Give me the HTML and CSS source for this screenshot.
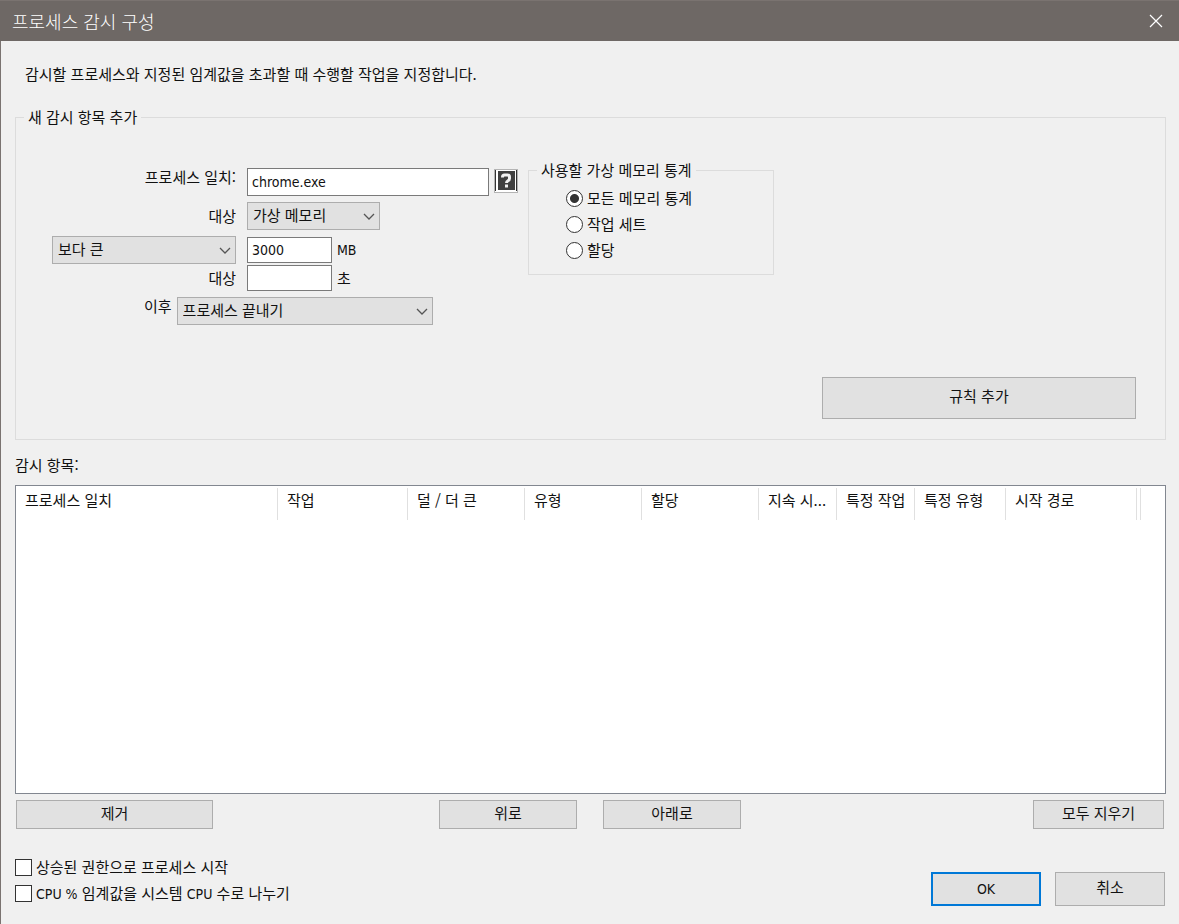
FILE: index.html
```html
<!DOCTYPE html>
<html lang="ko">
<head>
<meta charset="utf-8">
<title>프로세스 감시 구성</title>
<link rel="stylesheet" href="styles.css">
</head>
<body>
<header class="titlebar">
  <h1 class="title">프로세스 감시 구성</h1>
  <button class="close" type="button" aria-label="닫기">
    <svg width="14" height="14" viewBox="0 0 14 14" fill="none" stroke="#fff" stroke-width="1.2"><path d="M1 1l12 12M13 1L1 13"/></svg>
  </button>
</header>
<main class="dialog">
  <p class="intro">감시할 프로세스와 지정된 임계값을 초과할 때 수행할 작업을 지정합니다.</p>

  <fieldset class="group new-item">
    <legend>새 감시 항목 추가</legend>
    <div class="editor">
      <div class="form">
        <div class="row row-top">
          <label class="lead" for="match">프로세스 일치:</label>
          <input class="field field-wide" id="match" type="text" value="chrome.exe">
          <button class="help" type="button" aria-label="도움말">
            <svg width="24" height="24" viewBox="0 0 24 24"><path fill="#b4b4b4" d="M0 0h24v24H0z"/><path fill="#fff" d="M1 1h22v22H1z"/><path fill="#333" d="M1 1h1v21H1zM22 1h1v21h-1z"/><path fill="#404040" d="M4 2h17v19H4z"/><path fill="none" stroke="#f2f2f2" stroke-width="3" d="M8.500 8.500V8q0-2 2-2h3q2 0 2 2v1.500q0 1.500-1.500 2.200-1.500.8-1.500 2.300"/><path fill="#f2f2f2" d="M11 15.500h3v3h-3z"/></svg>
          </button>
        </div>
        <div class="row">
          <label class="lead" for="target">대상</label>
          <span class="combo combo-s">
            <select id="target"><option>가상 메모리</option></select>
            <svg class="chevron" viewBox="0 0 12 8"><path d="M1 1l5 5 5-5"/></svg>
          </span>
        </div>
        <div class="row">
          <span class="combo combo-m">
            <select aria-label="비교"><option>보다 큰</option></select>
            <svg class="chevron" viewBox="0 0 12 8"><path d="M1 1l5 5 5-5"/></svg>
          </span>
          <input class="field" id="amount" type="text" value="3000">
          <label class="unit latin" for="amount">MB</label>
        </div>
        <div class="row row-tight">
          <label class="lead" for="seconds">대상</label>
          <input class="field" id="seconds" type="text">
          <label class="unit" for="seconds">초</label>
        </div>
        <div class="row row-top row-action">
          <label for="action">이후</label>
          <span class="combo combo-l">
            <select id="action"><option>프로세스 끝내기</option></select>
            <svg class="chevron" viewBox="0 0 12 8"><path d="M1 1l5 5 5-5"/></svg>
          </span>
        </div>
      </div>
      <fieldset class="group stats">
        <legend>사용할 가상 메모리 통계</legend>
        <label class="choice"><input type="radio" name="stat" checked>모든 메모리 통계</label>
        <label class="choice"><input type="radio" name="stat">작업 세트</label>
        <label class="choice"><input type="radio" name="stat">할당</label>
      </fieldset>
    </div>
    <button class="btn add" type="button">규칙 추가</button>
  </fieldset>

  <h2 class="list-title">감시 항목:</h2>
  <div class="list">
    <table class="items">
      <colgroup>
        <col class="w-match"><col class="w-task"><col class="w-mid"><col class="w-mid"><col class="w-mid"><col class="w-short"><col class="w-short"><col class="w-kind"><col class="w-path"><col class="w-end"><col>
      </colgroup>
      <thead>
        <tr><th>프로세스 일치</th><th>작업</th><th>덜 / 더 큰</th><th>유형</th><th>할당</th><th>지속 시...</th><th>특정 작업</th><th>특정 유형</th><th>시작 경로</th><td></td><td></td></tr>
      </thead>
    </table>
  </div>

  <div class="actions">
    <button class="btn remove" type="button">제거</button>
    <div class="order">
      <button class="btn" type="button">위로</button>
      <button class="btn" type="button">아래로</button>
    </div>
    <button class="btn clear" type="button">모두 지우기</button>
  </div>

  <footer class="footer">
    <div class="options">
      <label class="choice"><input type="checkbox">상승된 권한으로 프로세스 시작</label>
      <label class="choice"><input type="checkbox"><span><span class="latin">CPU %</span> 임계값을 시스템 <span class="latin">CPU</span> 수로 나누기</span></label>
    </div>
    <div class="confirm">
      <button class="btn ok latin" type="submit">OK</button>
      <button class="btn" type="button">취소</button>
    </div>
  </footer>
</main>
</body>
</html>
```

FILE: styles.css
```css
* {
  box-sizing: border-box;
}

body {
  margin: 0;
  min-height: 100vh;
  display: flex;
  flex-direction: column;
  background: #f0f0f0;
  color: #111;
  font: 15px/24px "Noto Sans CJK KR", sans-serif;
}

button,
input,
select {
  margin: 0;
  font: inherit;
  color: inherit;
}

.latin,
.field {
  font-family: "DejaVu Sans Condensed", "DejaVu Sans", sans-serif;
  font-stretch: condensed;
  font-size: 14px;
}

.titlebar {
  display: flex;
  align-items: center;
  justify-content: space-between;
  height: 41px;
  padding: 0 12px;
  background: #6e6865;
  border-top: 1px solid #7a7370;
  color: #fff;
}

.title {
  margin: 0;
  font-size: 18px;
  font-weight: 300;
}

.close,
.help {
  display: flex;
  padding: 0;
  border: 0;
  background: none;
}

.close {
  padding: 4px;
}

.dialog {
  flex: 1;
  display: flex;
  flex-direction: column;
  padding: 21px 13px 18px 14px;
  border-left: 1px solid #7a7370;
}

.intro {
  margin: 0 10px 19px;
}

.group {
  min-width: 0;
  margin: 0;
  border: 1px solid #dcdcdc;
}

.new-item {
  display: flex;
  flex-direction: column;
  padding: 29px 29px 20px 36px;
}

.new-item > legend {
  margin-left: -28px;
  padding: 0 4px;
}

.editor {
  display: flex;
  align-items: flex-start;
  gap: 10px;
}

.form {
  display: flex;
  flex-direction: column;
  gap: 6px;
  width: 466px;
  padding-top: 10px;
}

.row {
  display: flex;
  align-items: center;
}

.row-tight {
  margin-top: -5px;
}

.row-top {
  align-items: flex-start;
}

.row-top label {
  line-height: 18px;
}

.lead {
  width: 184px;
  margin-right: 11px;
  text-align: right;
}

.row-action {
  gap: 5px;
  padding-left: 92px;
}

.field {
  width: 85px;
  height: 26px;
  padding: 0 4px;
  border: 1px solid #7a7a7a;
  border-radius: 0;
  background: #fff;
}

.field-wide {
  width: 242px;
  height: 28px;
}

.help {
  margin: 1px 0 0 5px;
}

.unit {
  margin-left: 5px;
}

.combo {
  position: relative;
  display: block;
}

.combo select {
  display: block;
  width: 100%;
  height: 28px;
  padding: 0 24px 2px 5px;
  appearance: none;
  border: 1px solid #adadad;
  border-radius: 0;
  background: #e1e1e1;
}

.chevron {
  position: absolute;
  right: 5px;
  top: 11px;
  width: 12px;
  height: 8px;
  fill: none;
  stroke: #555;
  stroke-width: 1.3;
  pointer-events: none;
}

.combo-s {
  width: 133px;
}

.combo-m {
  width: 184px;
  margin-right: 11px;
}

.combo-l {
  width: 256px;
}

.stats {
  width: 246px;
  padding: 3px 8px 11px 37px;
}

.stats legend {
  margin-left: -29px;
  padding: 0 4px;
}

.choice {
  display: flex;
  align-items: center;
  gap: 4px;
  height: 26px;
}

.choice input {
  appearance: none;
  width: 17px;
  height: 17px;
  border: 1px solid #333;
  background: #fff;
}

.choice input[type="radio"] {
  border-radius: 50%;
}

.choice input[type="radio"]:checked {
  background: radial-gradient(circle, #333 0 4px, #fff 5px);
}

.btn {
  height: 29px;
  padding: 0 8px 4px;
  border: 1px solid #adadad;
  border-radius: 0;
  background: #e1e1e1;
}

.add {
  align-self: flex-end;
  width: 314px;
  height: 42px;
  margin-top: 52px;
}

.list-title {
  margin: 13px 0 8px;
  font-size: 15px;
  font-weight: 400;
}

.list {
  flex: 1;
  min-height: 120px;
  padding-top: 2px;
  border: 1px solid #828790;
  background: #fff;
}

.items {
  width: 100%;
  table-layout: fixed;
  border-collapse: separate;
  border-spacing: 0;
}

.items th {
  height: 32px;
  padding: 0 0 8px 9px;
  border-right: 1px solid #e0e0e0;
  font-weight: 400;
  text-align: left;
  white-space: nowrap;
}

.items td {
  padding: 0;
}

.items th + td {
  border-right: 1px solid #e0e0e0;
}

.w-match { width: 262px; }
.w-task { width: 130px; }
.w-mid { width: 117px; }
.w-short { width: 78px; }
.w-kind { width: 91px; }
.w-path { width: 131px; }
.w-end { width: 4px; }

.actions {
  display: grid;
  grid-template-columns: 1fr auto 1fr;
  padding: 6px 2px 0 1px;
}

.remove {
  width: 197px;
}

.order {
  display: flex;
  gap: 26px;
}

.order .btn {
  width: 138px;
}

.clear {
  justify-self: end;
  width: 131px;
}

.footer {
  display: flex;
  justify-content: space-between;
  align-items: flex-end;
  margin-top: 25px;
}

.confirm {
  display: flex;
  gap: 14px;
  padding-right: 1px;
}

.confirm .btn {
  width: 110px;
  height: 34px;
}

.confirm .ok {
  padding-bottom: 0;
  border: 2px solid #0078d7;
}
```
